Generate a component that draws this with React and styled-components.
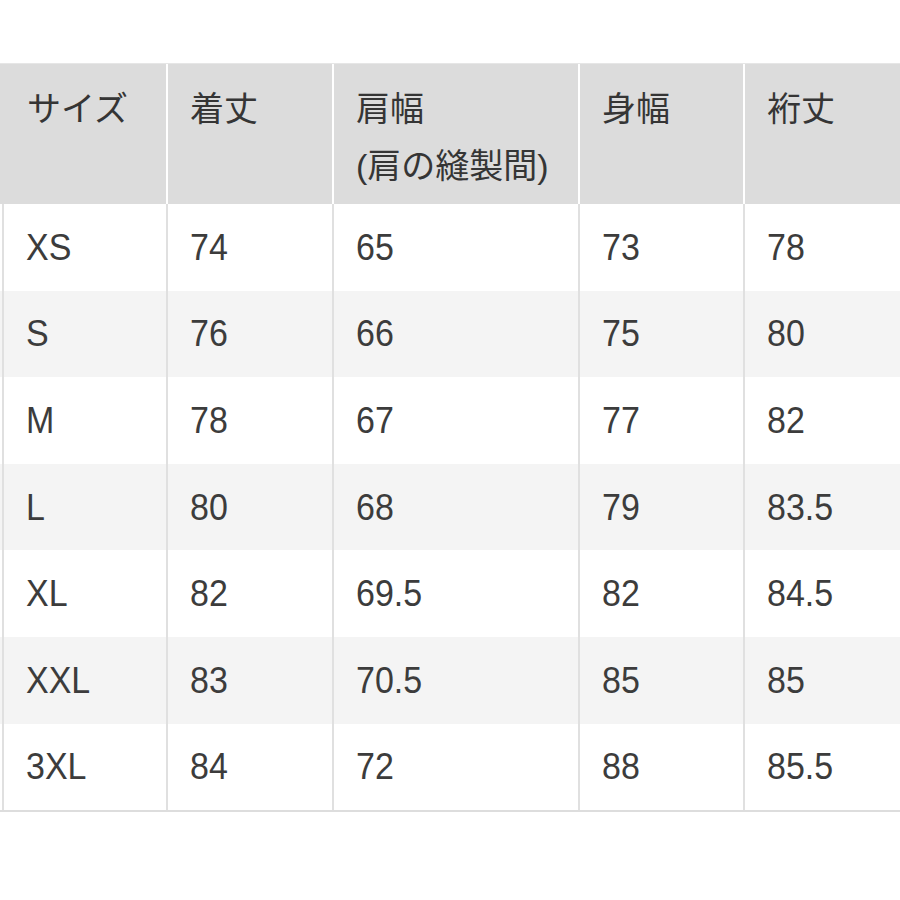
import React from "react";
import styled, { createGlobalStyle } from "styled-components";

const GlobalStyle = createGlobalStyle`
  html, body {
    margin: 0;
    padding: 0;
    background: #ffffff;
  }
  body {
    font-family: "Liberation Sans", "Noto Sans CJK JP", sans-serif;
    color: #333333;
  }
`;

const columns = "166px 166px 246px 165px 1fr";

const headers = [
  ["サイズ"],
  ["着丈"],
  ["肩幅", "(肩の縫製間)"],
  ["身幅"],
  ["裄丈"],
];

const rows = [
  ["XS", "74", "65", "73", "78"],
  ["S", "76", "66", "75", "80"],
  ["M", "78", "67", "77", "82"],
  ["L", "80", "68", "79", "83.5"],
  ["XL", "82", "69.5", "82", "84.5"],
  ["XXL", "83", "70.5", "85", "85"],
  ["3XL", "84", "72", "88", "85.5"],
];

function SizeTable() {
  return (
    <Table>
      <HeadRow>
        {headers.map((lines, i) => (
          <HeadCell key={i} first={i === 0}>
            {lines.map((line) => (
              <HeadLine key={line}>{line}</HeadLine>
            ))}
          </HeadCell>
        ))}
      </HeadRow>
      {rows.map((row, r) => (
        <BodyRow key={row[0]} striped={r % 2 === 1}>
          {row.map((value, i) => (
            <BodyCell key={i}>
              <Value>{value}</Value>
            </BodyCell>
          ))}
        </BodyRow>
      ))}
    </Table>
  );
}

export default function App() {
  return (
    <>
      <GlobalStyle />
      <Page>
        <SizeTable />
      </Page>
    </>
  );
}

const Page = styled.div`
  width: 900px;
  height: 900px;
  padding-top: 63px;
  box-sizing: border-box;
  overflow: hidden;
`;

const Table = styled.div`
  width: 902px;
  border-top: 1px solid #e6e6e6;
  border-bottom: 2px solid #dddddd;
`;

const HeadRow = styled.div`
  display: grid;
  grid-template-columns: ${columns};
  height: 140px;
  background: #ffffff;
`;

const HeadCell = styled.div`
  background: #dcdcdc;
  border-left: ${(p) => (p.first ? "0" : "2px solid #ffffff")};
  padding: 17px 0 0 ${(p) => (p.first ? "27px" : "22px")};
  font-size: 34px;
  line-height: 57px;
  color: #353535;
`;

const HeadLine = styled.div`
  white-space: nowrap;
`;

const BodyRow = styled.div`
  display: grid;
  grid-template-columns: ${columns};
  height: 86.6px;
  background: ${(p) => (p.striped ? "#f4f4f4" : "#ffffff")};
`;

const BodyCell = styled.div`
  display: flex;
  align-items: center;
  border-left: 2px solid #e0e0e0;
  padding-left: 22px;
  font-size: 34px;
  color: #3c3c3c;

  &:first-child {
    margin-left: 2px;
  }
`;

const Value = styled.span`
  display: inline-block;
  transform: scaleY(1.1);
`;
